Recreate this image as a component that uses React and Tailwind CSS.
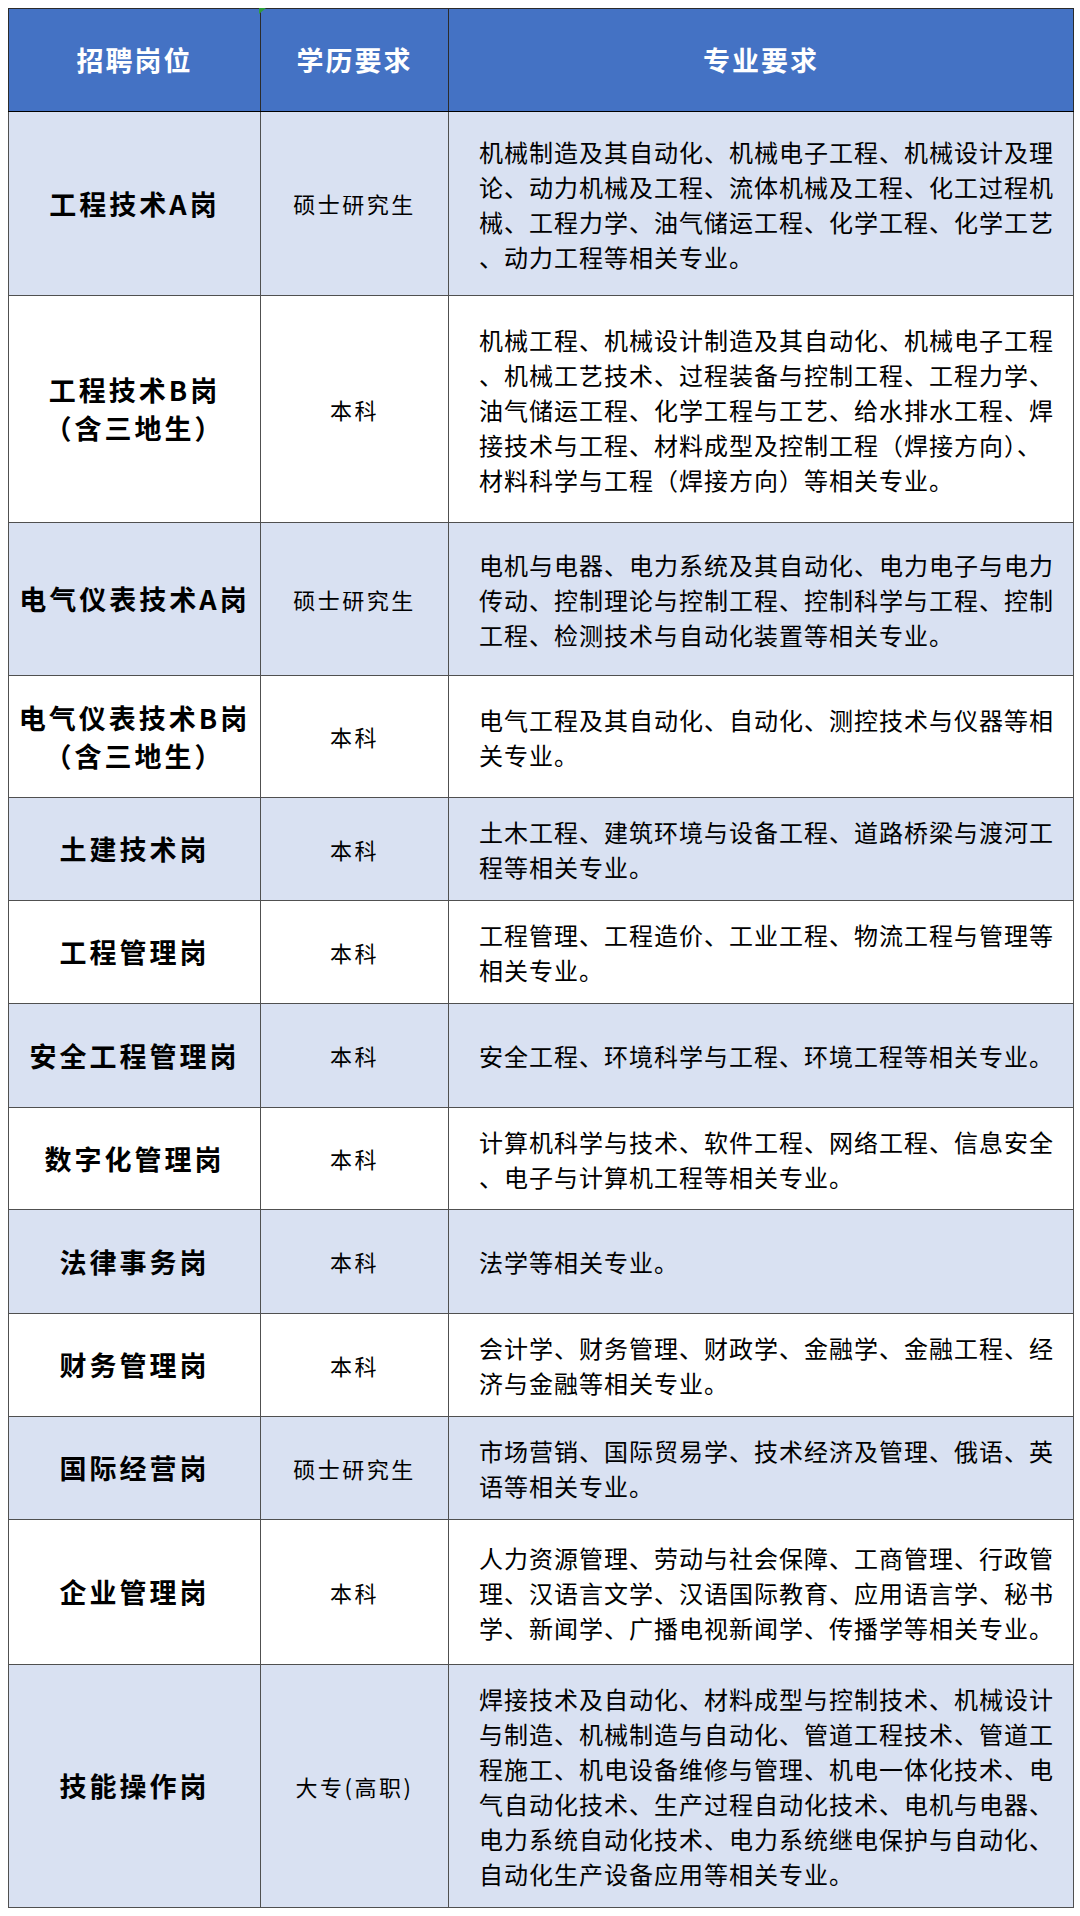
import React from "react";

const ROWS = [
  {
    post: ["工程技术A岗"],
    edu: "硕士研究生",
    h: 184,
    shade: true,
    lines: [
      "机械制造及其自动化、机械电子工程、机械设计及理",
      "论、动力机械及工程、流体机械及工程、化工过程机",
      "械、工程力学、油气储运工程、化学工程、化学工艺",
      "、动力工程等相关专业。",
    ],
  },
  {
    post: ["工程技术B岗", "（含三地生）"],
    edu: "本科",
    h: 227,
    shade: false,
    lines: [
      "机械工程、机械设计制造及其自动化、机械电子工程",
      "、机械工艺技术、过程装备与控制工程、工程力学、",
      "油气储运工程、化学工程与工艺、给水排水工程、焊",
      "接技术与工程、材料成型及控制工程（焊接方向）、",
      "材料科学与工程（焊接方向）等相关专业。",
    ],
  },
  {
    post: ["电气仪表技术A岗"],
    edu: "硕士研究生",
    h: 153,
    shade: true,
    lines: [
      "电机与电器、电力系统及其自动化、电力电子与电力",
      "传动、控制理论与控制工程、控制科学与工程、控制",
      "工程、检测技术与自动化装置等相关专业。",
    ],
  },
  {
    post: ["电气仪表技术B岗", "（含三地生）"],
    edu: "本科",
    h: 122,
    shade: false,
    lines: ["电气工程及其自动化、自动化、测控技术与仪器等相", "关专业。"],
  },
  {
    post: ["土建技术岗"],
    edu: "本科",
    h: 103,
    shade: true,
    lines: ["土木工程、建筑环境与设备工程、道路桥梁与渡河工", "程等相关专业。"],
  },
  {
    post: ["工程管理岗"],
    edu: "本科",
    h: 103,
    shade: false,
    lines: ["工程管理、工程造价、工业工程、物流工程与管理等", "相关专业。"],
  },
  {
    post: ["安全工程管理岗"],
    edu: "本科",
    h: 104,
    shade: true,
    lines: ["安全工程、环境科学与工程、环境工程等相关专业。"],
  },
  {
    post: ["数字化管理岗"],
    edu: "本科",
    h: 102,
    shade: false,
    lines: ["计算机科学与技术、软件工程、网络工程、信息安全", "、电子与计算机工程等相关专业。"],
  },
  {
    post: ["法律事务岗"],
    edu: "本科",
    h: 104,
    shade: true,
    lines: ["法学等相关专业。"],
  },
  {
    post: ["财务管理岗"],
    edu: "本科",
    h: 103,
    shade: false,
    lines: ["会计学、财务管理、财政学、金融学、金融工程、经", "济与金融等相关专业。"],
  },
  {
    post: ["国际经营岗"],
    edu: "硕士研究生",
    h: 103,
    shade: true,
    lines: ["市场营销、国际贸易学、技术经济及管理、俄语、英", "语等相关专业。"],
  },
  {
    post: ["企业管理岗"],
    edu: "本科",
    h: 145,
    shade: false,
    lines: [
      "人力资源管理、劳动与社会保障、工商管理、行政管",
      "理、汉语言文学、汉语国际教育、应用语言学、秘书",
      "学、新闻学、广播电视新闻学、传播学等相关专业。",
    ],
  },
  {
    post: ["技能操作岗"],
    edu: "大专(高职)",
    h: 243,
    shade: true,
    lines: [
      "焊接技术及自动化、材料成型与控制技术、机械设计",
      "与制造、机械制造与自动化、管道工程技术、管道工",
      "程施工、机电设备维修与管理、机电一体化技术、电",
      "气自动化技术、生产过程自动化技术、电机与电器、",
      "电力系统自动化技术、电力系统继电保护与自动化、",
      "自动化生产设备应用等相关专业。",
    ],
  },
];

const FONT = { fontFamily: '"Noto Sans CJK SC", "Noto Sans", sans-serif' };

export default function App() {
  return (
    <div className="min-h-[1916px] w-[1080px] bg-white pt-[8px] pl-[8px]" style={FONT}>
      <div className="relative w-[1065px]">
        {/* comment marker */}
        <svg className="absolute left-[250px] top-0 z-10" width="8" height="6" viewBox="0 0 8 6">
          <polygon points="1,0 8,0 1,6" fill="#2e9e3a" />
        </svg>
        <table className="w-[1065px] table-fixed border-collapse">
          <colgroup>
            <col className="w-[252px]" />
            <col className="w-[188px]" />
            <col className="w-[625px]" />
          </colgroup>
          <thead>
            <tr className="h-[103px] bg-[#4472c4] text-white">
              <th className="border-[1.5px] border-[#2b2b2b] border-b-black text-[27px] font-bold tracking-[2px]">招聘岗位</th>
              <th className="border-[1.5px] border-[#2b2b2b] border-b-black text-[27px] font-bold tracking-[2px]">学历要求</th>
              <th className="border-[1.5px] border-[#2b2b2b] border-b-black text-[27px] font-bold tracking-[2px]">专业要求</th>
            </tr>
          </thead>
          <tbody>
            {ROWS.map((r, i) => (
              <tr key={i} className={r.shade ? "bg-[#d9e1f2]" : "bg-white"} style={{ height: r.h }}>
                <td className="border-[1.5px] border-[#505050] text-center align-middle text-[27px] font-bold leading-[38px] tracking-[3px] text-black">
                  {r.post.map((p) => (
                    <div key={p} className="whitespace-nowrap">{p}</div>
                  ))}
                </td>
                <td className="border-[1.5px] border-[#505050] text-center align-middle text-[22px] tracking-[2.5px] text-black">
                  {r.edu}
                </td>
                <td className="border-[1.5px] border-[#505050] pl-[30px] align-middle text-[24px] leading-[35px] tracking-[1px] text-black">
                  {r.lines.map((l) => (
                    <div key={l} className="whitespace-nowrap">{l}</div>
                  ))}
                </td>
              </tr>
            ))}
          </tbody>
        </table>
      </div>
    </div>
  );
}
